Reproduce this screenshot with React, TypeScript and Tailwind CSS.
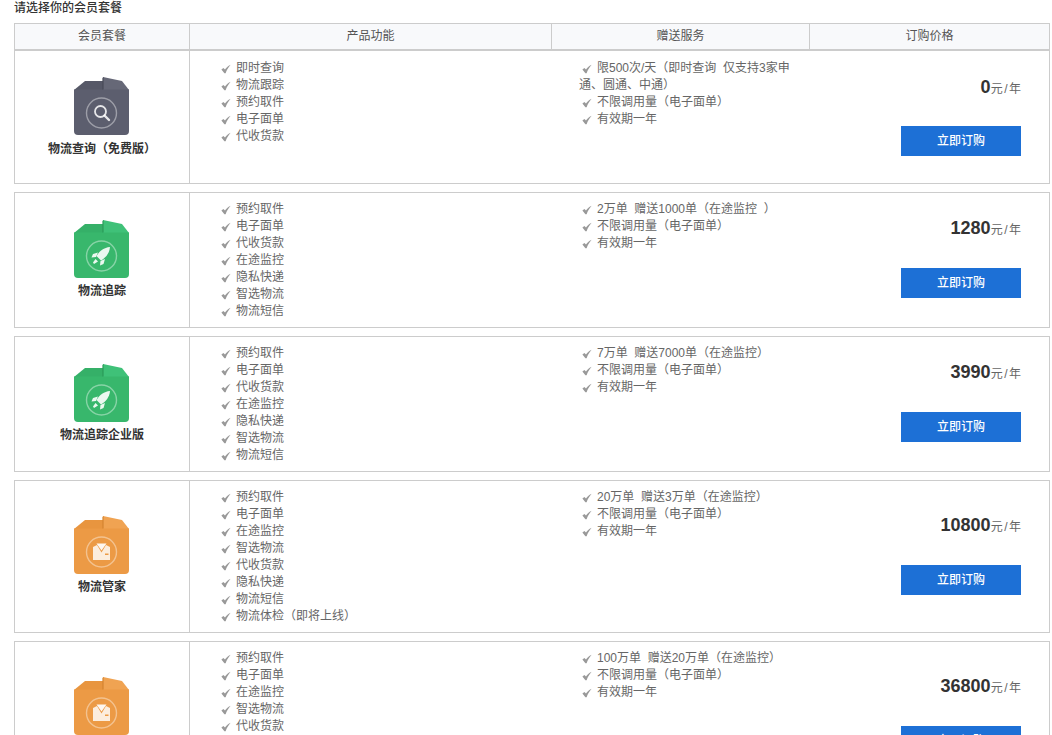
const plans = [
  {
    name: "物流查询（免费版）",
    kind: "search",
    price: "0",
    features: ["即时查询", "物流跟踪", "预约取件", "电子面单", "代收货款"],
    services: ["限500次/天（即时查询  仅支持3家申通、圆通、中通）", "不限调用量（电子面单）", "有效期一年"],
    height: "h-[133px]",
    iconShift: "",
  },
  {
    name: "物流追踪",
    kind: "rocket",
    price: "1280",
    features: ["预约取件", "电子面单", "代收货款", "在途监控", "隐私快递", "智选物流", "物流短信"],
    services: ["2万单  赠送1000单（在途监控  ）", "不限调用量（电子面单）", "有效期一年"],
    height: "h-[136px]",
    iconShift: "",
  },
  {
    name: "物流追踪企业版",
    kind: "rocket",
    price: "3990",
    features: ["预约取件", "电子面单", "代收货款", "在途监控", "隐私快递", "智选物流", "物流短信"],
    services: ["7万单  赠送7000单（在途监控）", "不限调用量（电子面单）", "有效期一年"],
    height: "h-[136px]",
    iconShift: "",
  },
  {
    name: "物流管家",
    kind: "butler",
    price: "10800",
    features: ["预约取件", "电子面单", "在途监控", "智选物流", "代收货款", "隐私快递", "物流短信", "物流体检（即将上线）"],
    services: ["20万单  赠送3万单（在途监控）", "不限调用量（电子面单）", "有效期一年"],
    height: "h-[153px]",
    iconShift: "pb-[1px]",
  },
  {
    name: "物流管家",
    kind: "butler",
    price: "36800",
    features: ["预约取件", "电子面单", "在途监控", "智选物流", "代收货款", "隐私快递", "物流短信", "物流体检（即将上线）"],
    services: ["100万单  赠送20万单（在途监控）", "不限调用量（电子面单）", "有效期一年"],
    height: "h-[153px]",
    iconShift: "pb-[1px]",
  },
];

const boxColors: Record<string, { body: string; lid: string; flap: string; seam: string }> = {
  search: { body: "#5c5e6e", lid: "#565867", flap: "#666877", seam: "#484a58" },
  rocket: { body: "#38b76c", lid: "#35b068", flap: "#3fc178", seam: "#2a9a59" },
  butler: { body: "#ec9a45", lid: "#e8953f", flap: "#f0a352", seam: "#d4842f" },
};

function Check() {
  return (
    <svg className="mr-[5px] ml-[1px] inline-block h-[10px] w-[10px] align-[-2px]" viewBox="0 0 10 10">
      <path d="M0.4 5.4 L2.4 3.9 L4 5.6 C5.2 3.8 6.8 2.2 9.6 0.8 C7.4 3.4 5.8 6 4.6 9.2 L3.4 9.2 Z" fill="#999" />
    </svg>
  );
}

function BoxIcon({ kind }: { kind: string }) {
  const c = boxColors[kind];
  return (
    <svg width="55" height="58" viewBox="0 0 55 58" className="-ml-[1px] block">
      <path d="M0 13 L11 4 L29 4 L29 13 Z" fill={c.lid} />
      <path d="M29 0 L48 4 L55 13 L29 13 Z" fill={c.flap} />
      <path d="M0 12.5 H55 V54 Q55 58 51 58 H4 Q0 58 0 54 Z" fill={c.body} />
      <path d="M28.4 12.5 V1 L29.6 0 V12.5 Z" fill={c.seam} />
      <circle cx="27.5" cy="36" r="15" fill="none" stroke="#fff" strokeOpacity="0.4" strokeWidth="1.4" />
      {kind === "search" && (
        <g fill="none" stroke="#fff" strokeOpacity="0.85">
          <circle cx="26.5" cy="34.5" r="5.5" strokeWidth="1.8" />
          <path d="M30.5 38.5 L35 43" strokeWidth="2.4" strokeLinecap="round" />
        </g>
      )}
      {kind === "rocket" && (
        <g fill="#fff" fillOpacity="0.9">
          <path d="M36 27 C30 27.5 25.5 31 22.5 36 L27 40.5 C32 37.5 35.5 33 36 27 Z" />
          <path d="M24 32.5 L19 34 L17.5 37.5 L22 37 Z" />
          <path d="M31 39 L29.5 44 L26 45.5 L26.5 41 Z" />
          <path d="M21.5 39 L24 41.5 L20 44 L19 42.5 Z" />
        </g>
      )}
      {kind === "butler" && (
        <g>
          <path d="M19 31 L23 29 L27.5 36.5 L32 29 L36 31 V44 H19 Z" fill="#fff" fillOpacity="0.82" />
          <path d="M22.5 27.5 H32.5 L27.5 34.5 Z" fill="#fff" fillOpacity="0.92" />
          <path d="M31 37.5 H34.5 V39 H31 Z" fill={c.body} />
        </g>
      )}
    </svg>
  );
}

export default function App() {
  return (
    <div className="h-[735px] overflow-hidden bg-white pl-[14px] font-['Liberation_Sans','Noto_Sans_CJK_SC',sans-serif] text-[12px] text-[#666]">
      <h2 className="h-[23px] pt-px text-[12px] leading-[14px] font-medium text-[#333]">请选择你的会员套餐</h2>
      <div className="flex h-[28px] w-[1036px] border border-b-2 border-[#ccc] bg-[#f8f9fb] text-center leading-[25px] text-[#555]">
        <div className="w-[175px] border-r border-[#ccc]">会员套餐</div>
        <div className="w-[362px] border-r border-[#ccc]">产品功能</div>
        <div className="w-[258px] border-r border-[#ccc]">赠送服务</div>
        <div className="flex-1">订购价格</div>
      </div>
      <div className="flex w-[1036px] flex-col gap-[8px]">
        {plans.map((plan, index) => (
          <div key={index} className={`flex shrink-0 border border-[#ccc] ${index === 0 ? "border-t-0" : ""} ${plan.height}`}>
            <div className={`flex w-[175px] shrink-0 flex-col items-center justify-center border-r border-[#ccc] ${plan.iconShift}`}>
              <BoxIcon kind={plan.kind} />
              <div className={`text-[12px] leading-[17px] font-bold text-[#333] ${index === 0 ? "mt-[6px]" : "mt-[5px]"}`}>{plan.name}</div>
            </div>
            <ul className={`w-[362px] shrink-0 pl-[30px] leading-[17px] ${index === 0 ? "pt-[9px]" : "pt-[8px]"}`}>
              {plan.features.map((feature) => (
                <li key={feature}>
                  <Check />
                  {feature}
                </li>
              ))}
            </ul>
            <ul className={`w-[245px] shrink-0 pl-[27px] leading-[17px] whitespace-pre-wrap ${index === 0 ? "pt-[9px]" : "pt-[8px]"}`}>
              {plan.services.map((service) => (
                <li key={service}>
                  <span className="ml-[2px]"><Check /></span>
                  {service}
                </li>
              ))}
            </ul>
            <div className={`flex flex-1 flex-col items-end justify-center pr-[28px] ${index === 0 ? "" : "pb-[1px]"}`}>
              <div className={`h-[16px] text-[#666] ${index === 0 ? "leading-[16px]" : "leading-[15px]"}`}>
                <span className="text-[18px] font-bold text-[#333]">{plan.price}</span>元<span className="mx-[1.5px]">/</span>年
              </div>
              <button className="mt-[31px] h-[30px] w-[120px] bg-[#1d70d6] text-[12px] font-medium text-white">立即订购</button>
            </div>
          </div>
        ))}
      </div>
    </div>
  );
}
